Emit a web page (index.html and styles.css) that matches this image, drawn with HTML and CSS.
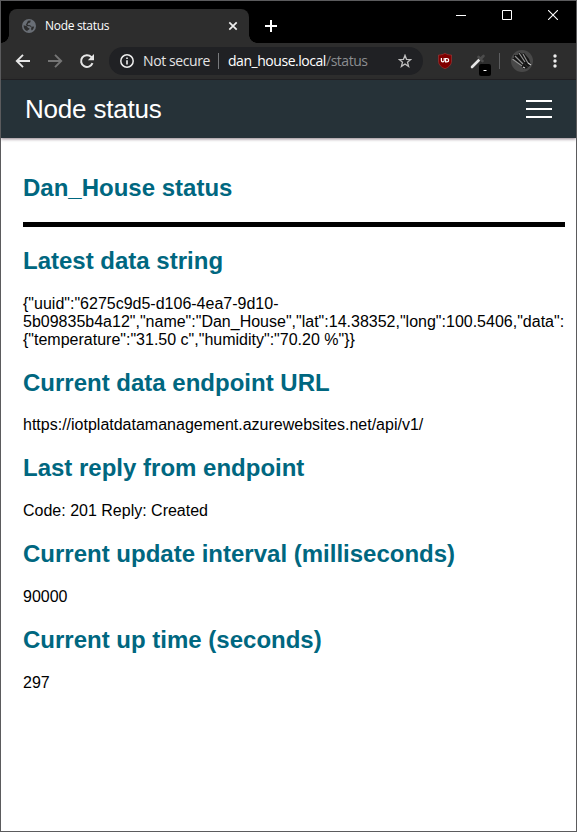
FILE: index.html
```html
<!DOCTYPE html>
<html lang="en">
<head>
<meta charset="utf-8">
<title>Node status</title>
<link rel="stylesheet" href="styles.css">
</head>
<body>
<div class="window">
  <div class="titlebar">
    <div class="tab">
      <svg class="globe" width="14" height="14" viewBox="0 0 14 14"><circle cx="7" cy="7" r="7" fill="#696e75"/><path d="M1.6 6.2 5 7.2l.9 1.6 1.7.6-.6 1.4-1.5.2.2 1.3C3 11.700 1.500 9.500 1.600 6.200ZM6 1.700l2.800-.1-.6 1.800-2 .9-.7 1.800 2.800.2 1.200 1.500 2.600-.2c-.2 1.800-1 3-2.300 3.900L9 10l.6-1.500-1.800-1.200-3-.2-.9-1.400Z" fill="#2d2d2d"/></svg>
      <span class="tab-title">Node status</span>
      <svg class="tab-close" width="10" height="10" viewBox="0 0 10 10"><path d="m1.300 1.300 7.400 7.400m0-7.400-7.400 7.400" stroke="#eee" stroke-width="1.700"/></svg>
    </div>
    <svg class="new-tab" width="12" height="12" viewBox="0 0 12 12"><path d="M6 0v12M0 6h12" stroke="#fff" stroke-width="2"/></svg>
    <div class="controls">
      <svg width="10" height="10" viewBox="0 0 10 10"><path d="M0 5.500h10" stroke="#fff"/></svg>
      <svg width="10" height="10" viewBox="0 0 10 10"><path d="M.5.500h9v9h-9Z" fill="none" stroke="#fff"/></svg>
      <svg width="10" height="10" viewBox="0 0 10 10"><path d="m0 0 10 10M10 0 0 10" stroke="#fff" stroke-width="1.100"/></svg>
    </div>
  </div>
  <div class="toolbar">
    <svg class="nav" width="16" height="16" viewBox="0 0 16 16"><path d="M15 8H2.500M8 1.800 1.800 8 8 14.200" fill="none" stroke="#e6e6e6" stroke-width="1.900"/></svg>
    <svg class="nav" width="16" height="16" viewBox="0 0 16 16"><path d="M1 8h12.500M8 1.800 14.200 8 8 14.200" fill="none" stroke="#757575" stroke-width="1.900"/></svg>
    <svg class="nav" width="16" height="16" viewBox="0 0 16 16"><path d="M13.500 10.200a5.900 5.900 0 1 1-1.300-6.300l1.300 1.300" fill="none" stroke="#e6e6e6" stroke-width="2"/><path d="M15 1v6.200H8.800Z" fill="#e6e6e6"/></svg>
    <div class="omnibox">
      <svg width="14" height="14" viewBox="0 0 14 14"><circle cx="7" cy="7" r="6.200" fill="none" stroke="#eee" stroke-width="1.500"/><path d="M6.200 6.200h1.600v4.300H6.200zM6.200 3.400h1.600V5H6.200z" fill="#eee"/></svg>
      <span class="security">Not secure</span>
      <span class="address">dan_house.local<span class="path">/status</span></span>
      <svg class="star" width="14" height="14" viewBox="0 0 14 14"><path d="m7 1.300 1.500 4 4.300.2-3.300 2.700 1.100 4.200L7 10 3.400 12.400l1.100-4.200L1.200 5.500l4.300-.2Z" fill="none" stroke="#bfbfbf" stroke-width="1.300"/></svg>
    </div>
    <svg class="shield" width="14" height="16" viewBox="0 0 14 16"><path d="M7 .3c2 1.300 4 1.700 6.500 1.700v6c0 4-3 6.300-6.500 7.700C3.500 14.300.5 12 .5 8V2C3 2 5 1.600 7 .3Z" fill="#800000" stroke="#a33c3c" stroke-width=".6"/><path d="M3.400 5v2.500c0 1.700 2.800 1.700 2.800 0V5M7.600 5v3.800h1c2.700 0 2.700-3.300 0-3.300H7.300" fill="none" stroke="#fff" stroke-width="1.200"/></svg>
    <svg class="picker" width="22" height="22" viewBox="0 0 22 22"><path d="m2 13 7-7" stroke="#e5e5e5" stroke-width="2.600" stroke-linecap="round"/><path d="m8.500 3 4 4M11 4.500 13.500 2" stroke="#4c4c4c" stroke-width="2.600" stroke-linecap="round"/><rect x="9" y="10" width="12" height="12" rx="2" fill="#000"/><path d="M13.500 16.500h3" stroke="#fff"/></svg>
    <div class="divider"></div>
    <svg class="avatar" width="22" height="22" viewBox="0 0 22 22"><circle cx="11" cy="11" r="11" fill="#484848"/><path d="M1 8 13 19l4-1-6-7 6 6 3-2-2-6-5-6-2 1-3-2-1 3-4 0v3Z" fill="#141414"/><path d="m1.500 9 9.500 7M4 6l8 8M8 3l6 9M12 4l5 9" stroke="#929292" stroke-width="1.200"/><path d="m12 17 2 1M17 13l3 2" stroke="#ccc" stroke-width="1.200"/></svg>
    <svg class="menu" width="4" height="14" viewBox="0 0 4 14"><g fill="#eee"><circle cx="2" cy="2" r="1.700"/><circle cx="2" cy="7" r="1.700"/><circle cx="2" cy="12" r="1.700"/></g></svg>
  </div>
  <header class="header">
    <span class="header-title">Node status</span>
    <div class="burger"><i></i><i></i><i></i></div>
  </header>
  <main class="content">
    <h2>Dan_House status</h2>
    <hr>
    <h2>Latest data string</h2>
    <p>{"uuid":"6275c9d5-d106-4ea7-9d10-<br>5b09835b4a12","name":"Dan_House","lat":14.38352,"long":100.5406,"data":<br>{"temperature":"31.50 c","humidity":"70.20 %"}}</p>
    <h2 class="endpoint">Current data endpoint URL</h2>
    <p>https://iotplatdatamanagement.azurewebsites.net/api/v1/</p>
    <h2>Last reply from endpoint</h2>
    <p>Code: 201 Reply: Created</p>
    <h2>Current update interval (milliseconds)</h2>
    <p>90000</p>
    <h2>Current up time (seconds)</h2>
    <p>297</p>
  </main>
</div>
</body>
</html>
```
FILE: styles.css
```css
* { box-sizing: border-box; }
body { margin: 0; background: #fff; font: 16px/18px "Liberation Sans", Arial, sans-serif; color: #000; }
svg { display: block; flex: none; }
.window { width: 577px; height: 832px; border: 1px solid #5b5b5d; overflow: hidden; display: flex; flex-direction: column; }
.titlebar { height: 42px; flex: none; background: #000; display: flex; padding-left: 8px; }
.tab { position: relative; width: 240px; height: 34px; margin-top: 8px; padding: 0 11px 0 13px; border-radius: 8px 8px 0 0; background: #2d2d2d; display: flex; align-items: center; }
.tab::before, .tab::after { content: ""; position: absolute; bottom: 0; width: 8px; height: 8px; }
.tab::before { left: -8px; background: radial-gradient(circle at 0 0, #000 7.500px, #2d2d2d 8px); }
.tab::after { right: -8px; background: radial-gradient(circle at 100% 0, #000 7.500px, #2d2d2d 8px); }
.tab-title { margin-left: 9px; font: 12px/16px "Open Sans", "Noto Sans", sans-serif; color: #fff; letter-spacing: -.3px; }
.tab-close { margin-left: auto; }
.new-tab { margin: 19px 0 0 16px; }
.controls { margin: 9px 18px 0 auto; display: flex; gap: 36px; }
.toolbar { height: 37px; flex: none; background: #2d2d2d; border-bottom: 1px solid #1e2021; display: flex; align-items: center; padding-left: 14px; }
.nav { margin-right: 16px; }
.omnibox { width: 314px; height: 28px; margin-left: -2px; border-radius: 14px; background: #202124; display: flex; align-items: center; padding: 0 11px; font: 14px/20px "Open Sans", "Noto Sans", sans-serif; color: #fff; white-space: nowrap; }
.security { margin-left: 9px; width: 76px; height: 16px; line-height: 15px; color: #e4e4e4; border-right: 1px solid #77797c; letter-spacing: -.4px; }
.address { margin-left: 9px; letter-spacing: -.46px; }
.path { color: #8b8d90; }
.star { margin-left: auto; }
.shield { margin-left: 15px; }
.picker { margin: 7px 0 0 18px; }
.divider { width: 1px; height: 16px; margin-left: 7px; background: #5c5d5f; }
.avatar { margin-left: 11px; }
.menu { margin-left: 20px; }
.header { height: 58px; flex: none; background: #263238; display: flex; align-items: center; justify-content: space-between; padding: 0 24px; box-shadow: 0 1px 3px rgba(60, 35, 50, .6); }
.header-title { font-size: 26px; line-height: 30px; color: #fff; letter-spacing: -.2px; }
.burger { width: 26px; display: flex; flex-direction: column; gap: 6px; }
.burger i { height: 2px; background: #fff; }
.content { flex: 1; padding: 36px 11px 0 22px; }
h2 { margin: 0 0 20px; font-size: 24px; line-height: 28px; color: #006780; }
.endpoint { margin-bottom: 19px; }
hr { height: 5px; margin: 0 0 20px; border: 0; background: #000; }
p { margin: 0 0 20px; white-space: nowrap; }
```
